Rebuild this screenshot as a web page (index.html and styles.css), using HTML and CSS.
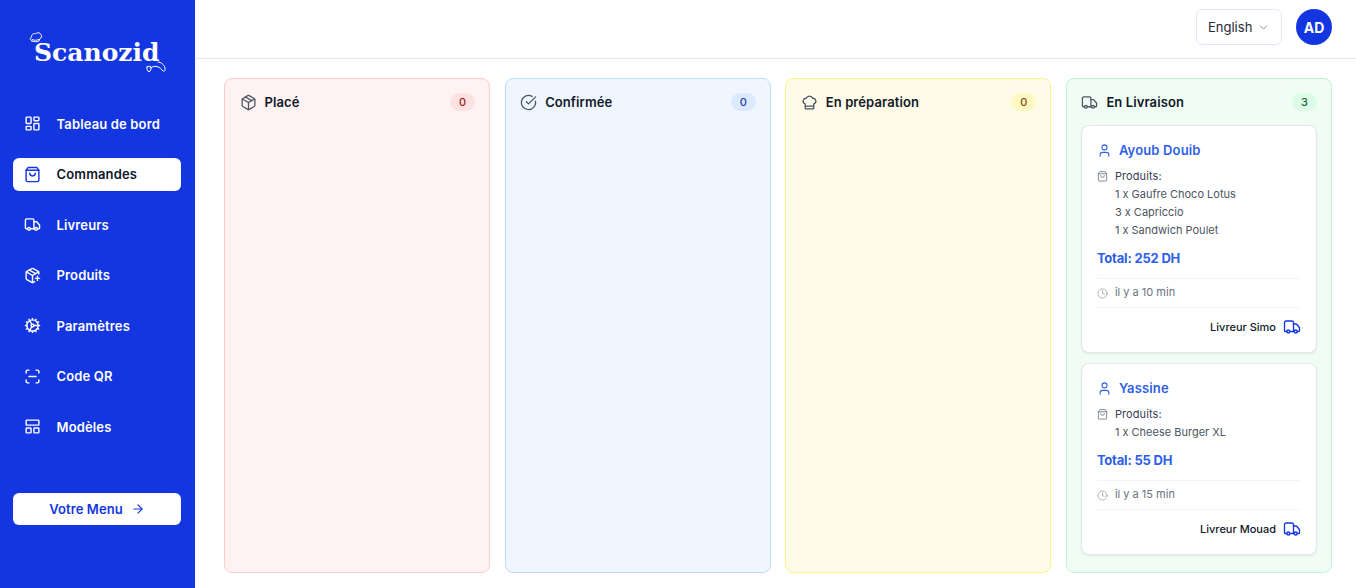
FILE: index.html
```html
<!DOCTYPE html>
<html lang="fr">
<head>
<meta charset="utf-8">
<title>Scanozid</title>
<link rel="stylesheet" href="styles.css">
</head>
<body>
<svg class="defs" aria-hidden="true">
  <symbol id="i-dash" viewBox="0 0 24 24"><rect x="3" y="3" width="7" height="9" rx="1"/><rect x="14" y="3" width="7" height="5" rx="1"/><rect x="14" y="12" width="7" height="9" rx="1"/><rect x="3" y="16" width="7" height="5" rx="1"/></symbol>
  <symbol id="i-bag" viewBox="0 0 24 24"><path d="M6 2 3 6v14a2 2 0 0 0 2 2h14a2 2 0 0 0 2-2V6l-3-4Z"/><path d="M3 6h18"/><path d="M16 10a4 4 0 0 1-8 0"/></symbol>
  <symbol id="i-truck" viewBox="0 0 24 24"><path d="M14 18V6a2 2 0 0 0-2-2H4a2 2 0 0 0-2 2v11a1 1 0 0 0 1 1h2"/><path d="M15 18H9"/><path d="M19 18h2a1 1 0 0 0 1-1v-3.65a1 1 0 0 0-.22-.624l-3.48-4.35A1 1 0 0 0 17.52 8H14"/><circle cx="17" cy="18" r="2"/><circle cx="7" cy="18" r="2"/></symbol>
  <symbol id="i-pkgplus" viewBox="0 0 24 24"><path d="M16 16h6"/><path d="M19 13v6"/><path d="M21 10V8a2 2 0 0 0-1-1.73l-7-4a2 2 0 0 0-2 0l-7 4A2 2 0 0 0 3 8v8a2 2 0 0 0 1 1.73l7 4a2 2 0 0 0 2 0l2-1.14"/><path d="m7.5 4.27 9 5.15"/><path d="M3.29 7 12 12l8.71-5"/><path d="M12 22V12"/></symbol>
  <symbol id="i-cog" viewBox="0 0 24 24"><path d="M12 20a8 8 0 1 0 0-16 8 8 0 0 0 0 16Z"/><path d="M12 14a2 2 0 1 0 0-4 2 2 0 0 0 0 4Z"/><path d="M12 2v2"/><path d="M12 22v-2"/><path d="m17 20.66-1-1.73"/><path d="M11 10.27 7 3.34"/><path d="m20.66 17-1.73-1"/><path d="m3.34 7 1.73 1"/><path d="M14 12h8"/><path d="M2 12h2"/><path d="m20.66 7-1.73 1"/><path d="m3.34 17 1.73-1"/><path d="m17 3.34-1 1.73"/><path d="m11 13.73-4 6.93"/></symbol>
  <symbol id="i-scan" viewBox="0 0 24 24"><path d="M3 7V5a2 2 0 0 1 2-2h2"/><path d="M17 3h2a2 2 0 0 1 2 2v2"/><path d="M21 17v2a2 2 0 0 1-2 2h-2"/><path d="M7 21H5a2 2 0 0 1-2-2v-2"/><path d="M7 12h10"/></symbol>
  <symbol id="i-layout" viewBox="0 0 24 24"><rect x="3" y="3" width="18" height="7" rx="1"/><rect x="3" y="14" width="7" height="7" rx="1"/><rect x="14" y="14" width="7" height="7" rx="1"/></symbol>
  <symbol id="i-arrow" viewBox="0 0 24 24"><path d="M5 12h14"/><path d="m12 5 7 7-7 7"/></symbol>
  <symbol id="i-chev" viewBox="0 0 24 24"><path d="m6 9 6 6 6-6"/></symbol>
  <symbol id="i-box" viewBox="0 0 24 24"><path d="M21 8a2 2 0 0 0-1-1.73l-7-4a2 2 0 0 0-2 0l-7 4A2 2 0 0 0 3 8v8a2 2 0 0 0 1 1.73l7 4a2 2 0 0 0 2 0l7-4A2 2 0 0 0 21 16Z"/><path d="m3.3 7 8.7 5 8.7-5"/><path d="M12 22V12"/><path d="m7.500 4.270 9 5.150"/></symbol>
  <symbol id="i-check" viewBox="0 0 24 24"><path d="M21.801 10A10 10 0 1 1 17 3.335"/><path d="m9 11 3 3L22 4"/></symbol>
  <symbol id="i-chef" viewBox="0 0 24 24"><path d="M17 21a1 1 0 0 0 1-1v-5.350c0-.457.316-.844.727-1.041a4 4 0 0 0-2.134-7.589 5 5 0 0 0-9.186 0 4 4 0 0 0-2.134 7.588c.411.198.727.585.727 1.041V20a1 1 0 0 0 1 1Z"/><path d="M6 17h12"/></symbol>
  <symbol id="i-user" viewBox="0 0 24 24"><path d="M19 21v-2a4 4 0 0 0-4-4H9a4 4 0 0 0-4 4v2"/><circle cx="12" cy="7" r="4"/></symbol>
  <symbol id="i-clock" viewBox="0 0 24 24"><circle cx="12" cy="12" r="10"/><path d="M12 6v6l4 2"/></symbol>
</svg>
<div class="app">
  <aside class="sidebar">
    <div class="logo">
      <svg class="logo-hat" viewBox="0 0 14 14"><path d="M3 10c-2-.5-2.500-3-.5-4C2.500 3 5 2 6.500 3 8 1 11.500 1.500 12 4c1.500 1 .5 3-1 3.500L10 10c-2 1-5 1-7 0Z"/><path d="M3 8.500c2 1 5 1 7 0"/></svg>
      <span class="logo-text">Scanozid</span>
      <svg class="logo-spoon" viewBox="0 0 20 12"><path d="M12 1c3 0 6 2.500 7 6 .5 2-.5 4-2 3-1-1-3-4-6-4.500C8 5 6 6 4 7"/><path d="M1 6c1.500-1 3-1 4 0 .5 2-.5 4-2 5-1.500-1-2.500-3-2-5Z"/></svg>
    </div>
    <nav class="nav">
      <a class="nav-item"><svg class="ico-nav"><use href="#i-dash"/></svg><span>Tableau de bord</span></a>
      <a class="nav-item active"><svg class="ico-nav"><use href="#i-bag"/></svg><span>Commandes</span></a>
      <a class="nav-item"><svg class="ico-nav"><use href="#i-truck"/></svg><span>Livreurs</span></a>
      <a class="nav-item"><svg class="ico-nav"><use href="#i-pkgplus"/></svg><span>Produits</span></a>
      <a class="nav-item"><svg class="ico-nav"><use href="#i-cog"/></svg><span>Paramètres</span></a>
      <a class="nav-item"><svg class="ico-nav"><use href="#i-scan"/></svg><span>Code QR</span></a>
      <a class="nav-item"><svg class="ico-nav"><use href="#i-layout"/></svg><span>Modèles</span></a>
    </nav>
    <a class="menu-btn"><span>Votre Menu</span><svg class="ico-arrow"><use href="#i-arrow"/></svg></a>
  </aside>
  <div class="content">
    <header class="topbar">
      <div class="lang"><span>English</span><svg class="ico-chev"><use href="#i-chev"/></svg></div>
      <div class="avatar">AD</div>
    </header>
    <main class="board">
      <section class="col col-red">
        <div class="col-head"><svg class="ico-head"><use href="#i-box"/></svg><h2>Placé</h2><span class="badge">0</span></div>
      </section>
      <section class="col col-blue">
        <div class="col-head"><svg class="ico-head"><use href="#i-check"/></svg><h2>Confirmée</h2><span class="badge">0</span></div>
      </section>
      <section class="col col-yellow">
        <div class="col-head"><svg class="ico-head"><use href="#i-chef"/></svg><h2>En préparation</h2><span class="badge">0</span></div>
      </section>
      <section class="col col-green">
        <div class="col-head"><svg class="ico-head"><use href="#i-truck"/></svg><h2>En Livraison</h2><span class="badge">3</span></div>
        <article class="card">
          <div class="cust"><svg class="ico-user"><use href="#i-user"/></svg><span>Ayoub Douib</span></div>
          <div class="items">
            <svg class="ico-small"><use href="#i-bag"/></svg>
            <div class="item-list">
              <div class="item-title">Produits:</div>
              <div>1 x Gaufre Choco Lotus</div>
              <div>3 x Capriccio</div>
              <div>1 x Sandwich Poulet</div>
            </div>
          </div>
          <div class="total">Total: 252 DH</div>
          <div class="time"><svg class="ico-small ico-clock"><use href="#i-clock"/></svg><span>il y a 10 min</span></div>
          <div class="driver"><span>Livreur Simo</span><svg class="ico-driver"><use href="#i-truck"/></svg></div>
        </article>
        <article class="card">
          <div class="cust"><svg class="ico-user"><use href="#i-user"/></svg><span>Yassine</span></div>
          <div class="items">
            <svg class="ico-small"><use href="#i-bag"/></svg>
            <div class="item-list">
              <div class="item-title">Produits:</div>
              <div>1 x Cheese Burger XL</div>
            </div>
          </div>
          <div class="total">Total: 55 DH</div>
          <div class="time"><svg class="ico-small ico-clock"><use href="#i-clock"/></svg><span>il y a 15 min</span></div>
          <div class="driver"><span>Livreur Mouad</span><svg class="ico-driver"><use href="#i-truck"/></svg></div>
        </article>
      </section>
    </main>
  </div>
</div>
</body>
</html>
```
FILE: styles.css
```css
* { box-sizing: border-box; }
html, body { margin: 0; height: 100%; }
body { font-family: Inter, "Noto Sans", sans-serif; color: #111827; background: #fff; overflow: hidden; }
.defs { display: none; }
svg { fill: none; stroke: currentColor; stroke-width: 2; stroke-linecap: round; stroke-linejoin: round; flex: none; }

.app { display: flex; width: 1356px; height: 588px; }

.sidebar { width: 195px; flex: none; background: #1336e0; padding: 28px 14px 0 13px; display: flex; flex-direction: column; color: #fff; }
.logo { position: relative; height: 48px; margin-bottom: 31px; padding: 9px 0 0 21px; }
.logo-text { font-family: "DejaVu Serif", serif; font-weight: 700; font-size: 25px; line-height: 32px; display: block; }
.logo-hat { position: absolute; left: 16px; top: 3px; width: 14px; height: 14px; stroke-width: 1; }
.logo-spoon { position: absolute; left: 133px; top: 33px; width: 20px; height: 12px; stroke-width: 1; }

.nav { display: flex; flex-direction: column; gap: 17.5px; }
.nav-item { height: 33px; display: flex; align-items: center; gap: 15.5px; padding: 0 11px; border-radius: 6px; font-size: 13px; font-weight: 600; color: #fff; letter-spacing: .15px; }
.nav-item.active { background: #fff; color: #0f172a; }
.nav-item.active .ico-nav { color: #1336e0; }
.ico-nav { width: 17px; height: 17px; stroke-width: 2; }

.menu-btn { margin-top: 50px; height: 32px; display: flex; align-items: center; justify-content: center; gap: 8px; background: #fff; color: #1336e0; border-radius: 6px; font-size: 13px; font-weight: 600; letter-spacing: .1px; }
.ico-arrow { width: 14px; height: 14px; }

.content { flex: 1; min-width: 0; display: flex; flex-direction: column; }
.topbar { height: 59px; flex: none; display: flex; justify-content: flex-end; align-items: center; gap: 14px; padding: 0 24px 4px 0; border-bottom: 1px solid #e5e7eb; }
.lang { width: 86px; height: 36px; border: 1px solid #e0e7ff; border-radius: 6px; display: flex; align-items: center; gap: 5px; padding-left: 11px; font-size: 13px; color: #1f2937; }
.ico-chev { width: 13px; height: 13px; color: #6b7280; stroke-width: 1.5; }
.avatar { width: 36px; height: 36px; border-radius: 50%; background: #1336e0; color: #fff; font-size: 14px; font-weight: 700; display: flex; align-items: center; justify-content: center; }

.board { flex: 1; display: grid; grid-template-columns: repeat(4, 1fr); gap: 14.5px; padding: 19px 24px 15px 29px; min-height: 0; }
.col { border: 1px solid; border-radius: 8px; padding: 14px; display: flex; flex-direction: column; gap: 10px; min-height: 0; }
.col-red { background: #fef2f2; border-color: #fecaca; }
.col-blue { background: #eff6ff; border-color: #bfdbfe; }
.col-yellow { background: #fefce8; border-color: #fef08a; }
.col-green { background: #f0fdf4; border-color: #bbf7d0; }
.col-head { height: 18px; display: flex; align-items: center; gap: 8px; margin-bottom: 4px; padding-left: .5px; }
.col-head h2 { margin: 0 0 1px; font-size: 13px; font-weight: 600; color: #111827; flex: 1; letter-spacing: .1px; }
.ico-head { width: 17px; height: 17px; color: #4b5563; stroke-width: 1.8; }
.badge { width: 25px; height: 18px; border-radius: 9px; font-size: 11px; font-weight: 500; display: flex; align-items: center; justify-content: center; }
.col-red .badge { background: #fee2e2; color: #991b1b; }
.col-blue .badge { background: #dbeafe; color: #1e40af; }
.col-yellow .badge { background: #fef9c3; color: #854d0e; }
.col-green .badge { background: #dcfce7; color: #166534; }

.card { background: #fff; border: 1px solid #e5e7eb; border-radius: 8px; padding: 14px 15px 16px; box-shadow: 0 1px 2px rgba(0,0,0,.08); }
.cust { height: 20px; display: flex; align-items: center; gap: 7px; font-size: 13px; font-weight: 600; color: #2f5fe8; margin-bottom: 7px; letter-spacing: .15px; }
.ico-user { width: 15px; height: 15px; stroke-width: 1.7; }
.items { display: flex; gap: 7px; font-size: 11px; line-height: 18px; color: #4b5563; }
.item-title { color: #374151; font-weight: 400; letter-spacing: .1px; }
.ico-small { width: 11px; height: 11px; margin-top: 4px; color: #6b7280; stroke-width: 1.8; }
.total { margin-top: 9px; height: 20px; line-height: 20px; font-size: 13px; font-weight: 700; color: #2f5fe8; letter-spacing: -.2px; }
.time { margin-top: 10px; border-top: 1px solid #f3f4f6; border-bottom: 1px solid #f3f4f6; padding: 4px 0 6px; display: flex; gap: 7px; font-size: 11px; line-height: 18px; color: #6b7280; }
.ico-clock { color: #9ca3af; margin-top: 5px; }
.driver { margin-top: 10px; height: 18px; display: flex; justify-content: flex-end; align-items: center; gap: 7px; font-size: 11px; font-weight: 500; color: #111827; }
.ico-driver { width: 18px; height: 18px; color: #1336e0; stroke-width: 1.8; }
```
